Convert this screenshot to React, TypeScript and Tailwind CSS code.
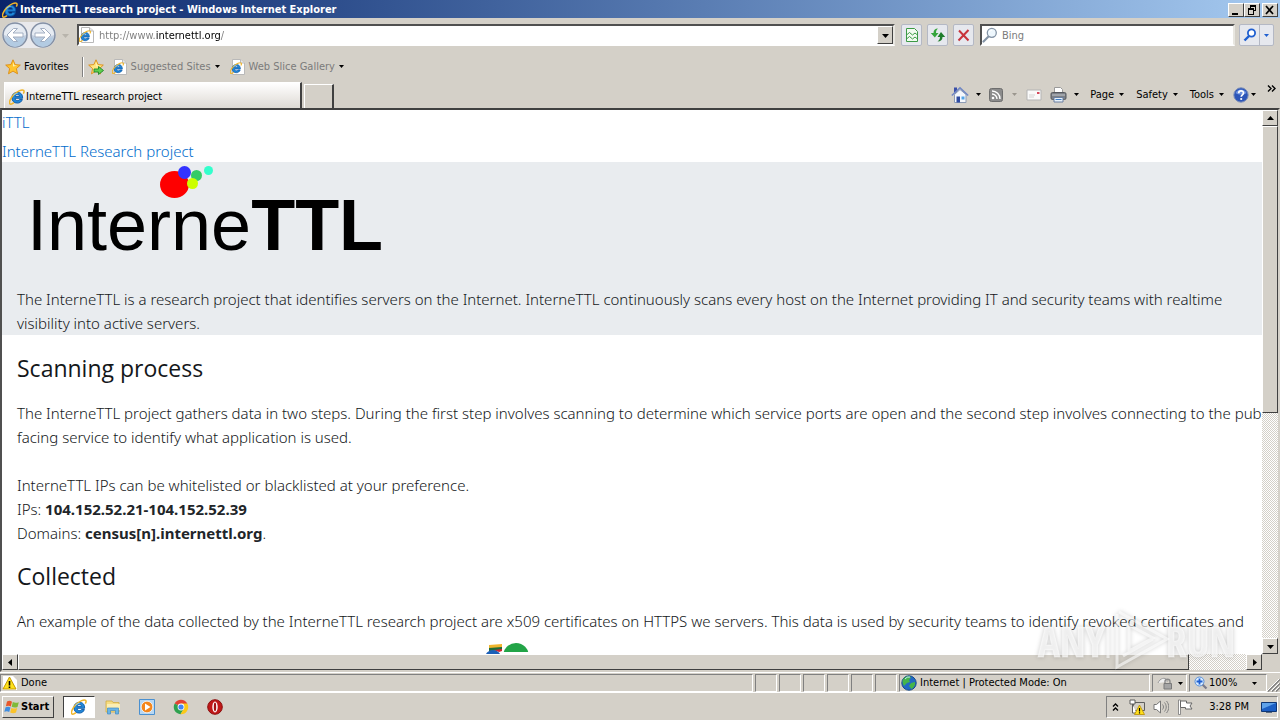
import type { ReactNode } from "react";

const raised =
  "border border-t-white border-l-white border-r-[#404040] border-b-[#404040] bg-[#d4d0c8]";
const sunken = "border border-t-[#808080] border-l-[#808080] border-r-white border-b-white";
const dither =
  "bg-[repeating-conic-gradient(#ffffff_0_25%,#d4d0c8_0_50%)] bg-[length:2px_2px]";

function Caret({ dir = "down", tone = "black" }: { dir?: "down" | "up" | "left" | "right"; tone?: string }) {
  const points = {
    down: "0,2 7,2 3.5,6",
    up: "0,5 7,5 3.5,1",
    left: "5,0 5,7 1,3.5",
    right: "2,0 2,7 6,3.5",
  }[dir];
  return (
    <svg viewBox="0 0 7 7" className="h-[7px] w-[7px] shrink-0" aria-hidden="true">
      <polygon points={points} fill={tone} />
    </svg>
  );
}

function MenuCaret({ tone = "black" }: { tone?: string }) {
  return (
    <svg viewBox="0 0 5 3" className="h-[3px] w-[5px] shrink-0" aria-hidden="true">
      <polygon points="0,0 5,0 2.5,3" fill={tone} />
    </svg>
  );
}

function IeGlyph() {
  return (
    <g>
      <path
        d="M13.600 9.300H6.100c.1 1.500 1 2.300 2.300 2.300 1 0 1.700-.4 2.100-1.100h2.900c-.8 2.300-2.600 3.600-5.100 3.600C5 14.100 2.900 12 2.900 8.800S5.100 3.300 8.400 3.300c3.400 0 5.400 2.300 5.200 6zM6.200 7.300h4.300c-.1-1.200-.9-1.900-2.100-1.900-1.200 0-2 .7-2.200 1.900z"
        fill="#2187d8"
        stroke="#0b57a5"
        strokeWidth=".9"
      />
      <path
        d="M5 13.600c-2 1.500-3.600 1.900-4.200 1.100C-.3 13.200 1.600 9 5 5.500 8.600 1.900 13.100.1 14.600 1.400c.7.6.5 1.900-.3 3.300"
        fill="none"
        stroke="#efb52a"
        strokeWidth="1.500"
      />
      <path d="M4.500 6.500c.9-1.400 2.400-2 4-2" fill="none" stroke="#8bd3ff" strokeWidth=".9" />
    </g>
  );
}

function IeIcon() {
  return (
    <svg viewBox="0 0 16 16" className="h-4 w-4 shrink-0" aria-hidden="true">
      <IeGlyph />
    </svg>
  );
}

function IePageIcon() {
  return (
    <svg viewBox="0 0 16 16" className="h-4 w-4 shrink-0" aria-hidden="true">
      <path d="M2.500 .5h8l4 3.500v11.500h-12z" fill="#fff" stroke="#b9b9b9" />
      <path d="M10.500 .5v3.500h4" fill="#e8e8e8" stroke="#b9b9b9" />
      <g transform="translate(0 3) scale(.76)">
        <IeGlyph />
      </g>
    </svg>
  );
}

function StarIcon({ arrow = false }: { arrow?: boolean }) {
  return (
    <svg viewBox="0 0 16 16" className="h-4 w-4 shrink-0" aria-hidden="true">
      <path
        d="M8 .8l2.100 4.800 5.200.5-3.900 3.500 1.100 5.200L8 12.100l-4.500 2.700 1.100-5.200L.7 6.100l5.200-.5z"
        fill={arrow ? "#ffe680" : "#ffc42e"}
        stroke="#dc8b10"
        strokeWidth=".9"
      />
      <path d="M8 3l1.200 3.300 3 .4-4.200.8z" fill="#fff2b0" />
      {arrow && (
        <path d="M6 10h4.500V7.500L15.500 11.500l-5 4V13H6z" fill="#5fd04f" stroke="#21862a" strokeWidth=".9" />
      )}
    </svg>
  );
}

function ArrowCircle({ label, flip = false }: { label: string; flip?: boolean }) {
  return (
    <button aria-label={label} className="h-[26px] w-[26px]">
      <svg viewBox="0 0 26 26" className="h-[26px] w-[26px]" aria-hidden="true">
        <circle cx="13" cy="13" r="12" fill="#c3cfe0" stroke="#8490a4" strokeWidth="1.500" />
        <path d="M2 13a11 11 0 0 1 22 0c-5 2-17 2-22 0z" fill="#e6ebf2" />
        <path d="M3 15c5 2 15 2 20 0a10 10 0 0 1-20 0z" fill="#b3cbe2" />
        <g transform={flip ? "matrix(-1 0 0 1 26 0)" : undefined}>
          <path
            d="M5 13l6.500-6.500h4l-4.500 4.500h10v4H11l4.500 4.500h-4z"
            fill="#fff"
            stroke="#9aa7bc"
            strokeWidth=".9"
          />
        </g>
      </svg>
    </button>
  );
}

function Magnifier({ dark }: { dark: string }) {
  return (
    <svg viewBox="0 0 16 16" className="h-4 w-4 shrink-0" aria-hidden="true">
      <path d="M1.500 14.500l5-5" stroke={dark} strokeWidth="2.200" strokeLinecap="round" />
      <circle cx="9.800" cy="5.800" r="4.500" fill="#eef7fd" stroke={dark} strokeWidth="1.300" />
      <path d="M7.500 5a2.500 2.500 0 0 1 2.500-1.800" stroke="#fff" fill="none" />
    </svg>
  );
}

function ToolButton({ label, children }: { label: string; children: ReactNode }) {
  return (
    <button
      aria-label={label}
      className="flex h-[22px] w-[21px] items-center justify-center rounded-[2px] border border-[#b4b8c4] bg-[#e6e8ee]"
    >
      <svg viewBox="0 0 16 16" className="h-4 w-4 shrink-0" aria-hidden="true">
        {children}
      </svg>
    </button>
  );
}

function TitleBar() {
  return (
    <header className="flex h-[18px] shrink-0 items-center bg-linear-to-r from-[#0a246a] to-[#a6caf0] pt-px pr-[2px] pl-[2px] font-bold text-white">
      <IeIcon />
      <h1 className="ml-[2px] flex-1 whitespace-nowrap">InterneTTL research project - Windows Internet Explorer</h1>
      <div className="flex text-black">
        <button aria-label="Minimize" className={`h-[14px] w-4 ${raised}`}>
          <svg viewBox="0 0 14 12" className="h-3 w-[14px]" aria-hidden="true">
            <path d="M3 9h6v2H3z" />
          </svg>
        </button>
        <button aria-label="Restore" className={`h-[14px] w-4 ${raised}`}>
          <svg viewBox="0 0 14 12" className="h-3 w-[14px]" aria-hidden="true">
            <path d="M5 1h6v6H9V6h1V3H6v1H5zM3 4h6v7H3zM4 6v4h4V6z" fillRule="evenodd" />
          </svg>
        </button>
        <button aria-label="Close" className={`ml-[2px] h-[14px] w-4 ${raised}`}>
          <svg viewBox="0 0 14 12" className="h-3 w-[14px]" aria-hidden="true">
            <path d="M3 2l7 8M10 2l-7 8" stroke="#000" strokeWidth="1.700" />
          </svg>
        </button>
      </div>
    </header>
  );
}

function AddressRow() {
  return (
    <div className="flex h-[34px] shrink-0 items-center pr-[6px] pl-[2px]">
      <div className="flex gap-[2px] rounded-full bg-[#e9e9ec]">
        <ArrowCircle label="Back" />
        <ArrowCircle label="Forward" flip />
      </div>
      <button aria-label="Recent pages" className="mr-2 ml-[6px]">
        <Caret tone="#b8b4ac" />
      </button>
      <div className="flex h-[22px] flex-1 items-center border-2 border-t-[#505050] border-r-[#e8e6e0] border-b-white border-l-[#505050] bg-white">
        <IePageIcon />
        <input
          aria-label="Address"
          defaultValue="http://www.internettl.org/"
          className="ml-[4px] min-w-0 flex-1 bg-[linear-gradient(90deg,#7b7b7b_57px,#000_57px,#000_121px,#7b7b7b_121px)] bg-clip-text pt-px text-transparent outline-none"
        />
        <button aria-label="Show addresses" className={`flex h-[18px] w-4 items-center justify-center ${raised}`}>
          <Caret />
        </button>
      </div>
      <div className="ml-[6px] flex gap-[5px]">
        <ToolButton label="Compatibility view">
          <path d="M2.500 1.500h8l3 3v10h-11z" fill="#f2fbf0" stroke="#3c9a45" />
          <path d="M2.500 8l3-2.500 3 2.500 2.500-2 2.500 2M2.500 12l3-2.500 3 2.500 2.500-2 2.500 2" fill="none" stroke="#3c9a45" />
        </ToolButton>
        <ToolButton label="Refresh">
          <path d="M8 1.500C5 1.500 3.500 3 3.500 6H.8l4 4.500L8.500 6H6C6 4 6.500 3 8 1.500z" fill="#35a53c" />
          <path d="M7.500 14.500c3.300 0 5-1.700 5-4.500h2.700L11 5 7.500 10H10c0 2-.7 3-2.500 4.500z" fill="#1f7d2b" />
        </ToolButton>
        <ToolButton label="Stop">
          <path d="M3 3.500l9.500 10M12.500 3l-10 10.500" stroke="#c8343c" strokeWidth="2" />
        </ToolButton>
      </div>
      <div className="ml-[6px] flex h-[22px] w-[255px] items-center border-2 border-t-[#505050] border-r-[#e8e6e0] border-b-white border-l-[#505050] bg-white">
        <Magnifier dark="#8494a6" />
        <input
          aria-label="Search"
          placeholder="Bing"
          className="ml-[4px] min-w-0 flex-1 pt-px outline-none placeholder:text-[#7b7b7b]"
        />
      </div>
      <div className="ml-[4px] flex h-[22px] rounded-[2px] border border-[#b4b8c4] bg-[#e6e8ee]">
        <button aria-label="Search" className="flex w-5 items-center justify-center border-r border-[#b4b8c4]">
          <svg viewBox="0 0 14 14" className="h-[14px] w-[14px]" aria-hidden="true">
            <path d="M1.500 12.500l4.500-4.500" stroke="#1f5fd0" strokeWidth="2.400" />
            <circle cx="8.500" cy="5" r="3.600" fill="#fff" stroke="#1f5fd0" strokeWidth="1.800" />
          </svg>
        </button>
        <button aria-label="Search options" className="flex w-[13px] items-center justify-center">
          <MenuCaret tone="#1f5fd0" />
        </button>
      </div>
    </div>
  );
}

function FavoritesRow() {
  return (
    <nav aria-label="Favorites" className="flex h-[29px] shrink-0 items-center pl-[5px]">
      <button className="flex items-center gap-[3px]">
        <StarIcon />
        Favorites
      </button>
      <span className="ml-[13px] h-5 w-[2px] border-r border-l border-r-white border-l-[#808080]" />
      <button aria-label="Add to favorites bar" className="ml-[4px]">
        <StarIcon arrow />
      </button>
      <button className="ml-2 flex items-center text-[#7b7b7b]">
        <IePageIcon />
        <span className="mr-[4px] ml-[3px]">Suggested Sites</span>
        <MenuCaret />
      </button>
      <button className="ml-[10px] flex items-center text-[#7b7b7b]">
        <IePageIcon />
        <span className="mr-[4px] ml-[3px]">Web Slice Gallery</span>
        <MenuCaret />
      </button>
    </nav>
  );
}

function CommandMenu({ label }: { label: string }) {
  return (
    <button className="flex items-center gap-[5px]">
      {label}
      <MenuCaret />
    </button>
  );
}

function TabRow() {
  return (
    <div className="flex h-[27px] shrink-0 items-end pl-[4px]">
      <button className="flex h-[26px] w-[298px] items-center gap-px border border-t-white border-r-2 border-b-0 border-l-white border-r-[#404040] bg-linear-to-b from-white to-[#dedad4] pt-[2px] pl-[4px]">
        <IeIcon />
        InterneTTL research project
      </button>
      <button
        aria-label="New tab"
        className="ml-[2px] h-6 w-[30px] border border-t-white border-r-2 border-b-0 border-l-white border-r-[#404040] bg-[#d4d0c8]"
      />
      <div className="flex h-[27px] flex-1 items-center justify-end">
        <button aria-label="Home" className="flex items-center gap-[7px]">
          <svg viewBox="0 0 18 18" className="h-[18px] w-[18px]" aria-hidden="true">
            <path d="M3 1.500h3v5H3z" fill="#3a4fa8" />
            <path d="M3.500 8.500L9 3.500l6 5v8H3.500z" fill="#f4f7fc" stroke="#8c9bb5" />
            <path d="M.8 9.500L9 1.800l8.200 7.700" fill="none" stroke="#6f86c4" strokeWidth="1.500" />
            <path d="M5.500 10.500H9v6H5.500z" fill="#2d4aa0" />
            <path d="M10.500 10.500h3v3h-3z" fill="#54a4e8" />
          </svg>
          <MenuCaret />
        </button>
        <button aria-label="Feeds" className="ml-2 flex items-center gap-[9px]">
          <svg viewBox="0 0 14 14" className="h-[14px] w-[14px]" aria-hidden="true">
            <rect x=".5" y=".5" width="13" height="13" rx="2" fill="#8b8b8b" stroke="#6e6e6e" />
            <circle cx="4" cy="10" r="1.300" fill="#fff" />
            <path d="M3 6a5 5 0 0 1 5 5M3 3a8 8 0 0 1 8 8" fill="none" stroke="#fff" strokeWidth="1.400" />
          </svg>
          <MenuCaret tone="#9a968e" />
        </button>
        <button aria-label="Read mail" className="ml-[9px]">
          <svg viewBox="0 0 16 12" className="h-3 w-4" aria-hidden="true">
            <path d="M1 1h14v10H1z" fill="#fafafa" stroke="#b4b4b4" />
            <path d="M11 3h2.500v2H11z" fill="#d6495c" />
            <path d="M3 6h6M3 8h5" stroke="#d2d2d2" />
          </svg>
        </button>
        <button aria-label="Print" className="ml-2 flex items-center gap-[7px]">
          <svg viewBox="0 0 17 16" className="h-4 w-[17px]" aria-hidden="true">
            <path d="M4.500 .5h6l2 2v4h-8z" fill="#fff" stroke="#9a9a9a" />
            <rect x="1" y="5.500" width="15" height="7" rx="1.500" fill="#7c8086" stroke="#55585e" />
            <path d="M2 8h13" stroke="#c5c9cf" />
            <path d="M4 10.500h9v4.500H4z" fill="#e8f2fb" stroke="#6a7fa0" />
            <path d="M5.500 12.500h6" stroke="#3f7fc5" />
          </svg>
          <MenuCaret />
        </button>
        <div className="ml-[11px] flex gap-3">
          <CommandMenu label="Page" />
          <CommandMenu label="Safety" />
          <CommandMenu label="Tools" />
        </div>
        <button aria-label="Help" className="ml-[9px] flex items-center gap-[2px]">
          <svg viewBox="0 0 16 16" className="h-4 w-4" aria-hidden="true">
            <circle cx="8" cy="8" r="7.200" fill="#2c55b8" stroke="#7d8fb8" />
            <path d="M2.500 6a6 6 0 0 1 11 0c-3 2-8 2-11 0z" fill="#6d92e0" />
            <path d="M5.700 6.200c0-3 4.800-3 4.800-.2 0 1.800-2.300 1.800-2.300 3.700" fill="none" stroke="#fff" strokeWidth="1.700" />
            <circle cx="8.200" cy="12" r="1.100" fill="#fff" />
          </svg>
          <MenuCaret />
        </button>
        <button aria-label="More commands" className="mr-[4px] ml-[11px] self-start pt-[4px]">
          <svg viewBox="0 0 9 7" className="h-[7px] w-[9px]" aria-hidden="true">
            <path d="M1 .5l3 3-3 3M5 .5l3 3-3 3" fill="none" stroke="#000" strokeWidth="1.400" />
          </svg>
        </button>
      </div>
    </div>
  );
}

function SiteLogo() {
  return (
    <svg viewBox="0 0 400 100" className="h-[100px] w-[400px]" role="img" aria-label="InterneTTL">
      <text x="25" y="88" fontFamily="Liberation Sans, Arial, sans-serif" fontSize="72" fill="#000">
        Interne<tspan fontWeight="700">TTL</tspan>
      </text>
      <ellipse cx="172.500" cy="22.500" rx="14.500" ry="13.500" fill="#fe0000" />
      <circle cx="194.500" cy="13.500" r="5.500" fill="#33cc66" />
      <circle cx="190.500" cy="21.500" r="5.500" fill="#ccff00" />
      <circle cx="182.500" cy="10.500" r="6.500" fill="#3333ff" />
      <circle cx="206.500" cy="8.500" r="4.500" fill="#33ffcc" />
    </svg>
  );
}

function SectionTitle({ children }: { children: ReactNode }) {
  return (
    <h2 className="mb-[18px] font-['Open_Sans','Noto_Sans',sans-serif] text-[23px] leading-[29px] font-normal">
      {children}
    </h2>
  );
}

function PageContent() {
  return (
    <main className="min-w-0 flex-1 overflow-hidden bg-white font-['Noto_Sans','Open_Sans',sans-serif] text-[15px] leading-6 font-light whitespace-nowrap text-[#14171a]">
      <div className="flex flex-col items-start gap-[5px] text-[#006bcc]">
        <a href="#ittl">iTTL</a>
        <a href="#project" className="-mb-px">
          InterneTTL Research project
        </a>
      </div>
      <section className="bg-[#e9ecef]">
        <SiteLogo />
        <p className="pt-[25px] pl-[15px]">
          The InterneTTL is a research project that identifies servers on the Internet. InterneTTL continuously scans
          every host on the Internet providing IT and security teams with realtime
          <br />
          visibility into active servers.
        </p>
      </section>
      <section className="pt-[19px] pl-[15px]">
        <SectionTitle>Scanning process</SectionTitle>
        <p>
          The InterneTTL project gathers data in two steps. During the first step involves scanning to determine which
          service ports are open and the second step involves connecting to the public-
          <br />
          facing service to identify what application is used.
        </p>
        <p className="mt-6">
          InterneTTL IPs can be whitelisted or blacklisted at your preference.
          <br />
          IPs: <b className="font-bold text-[#212529]">104.152.52.21-104.152.52.39</b>
          <br />
          Domains: <b className="font-bold text-[#212529]">census[n].internettl.org</b>.
        </p>
      </section>
      <section className="pt-[17px] pl-[15px]">
        <SectionTitle>Collected</SectionTitle>
        <p>
          An example of the data collected by the InterneTTL research project are x509 certificates on HTTPS we servers.
          This data is used by security teams to identify revoked certificates and
        </p>
        <svg viewBox="0 0 60 26" className="mt-[9px] ml-[463px] h-[26px] w-[60px]" aria-hidden="true">
          <path d="M9 3l13-1v6l-13 1z" fill="#f0b52d" />
          <path d="M9 6l13-1v3l-13 1z" fill="#1f6b3a" />
          <path d="M14 8l8-1v2l-3 1z" fill="#d3232f" />
          <circle cx="13" cy="16" r="8" fill="#1b5fb8" />
          <circle cx="36" cy="14" r="13" fill="#22a447" />
          <path d="M22 10h28v16H22z" fill="#fff" />
        </svg>
      </section>
    </main>
  );
}

function ScrollButton({ dir }: { dir: "up" | "down" | "left" | "right" }) {
  return (
    <button
      aria-label={`Scroll ${dir}`}
      className={`flex h-4 w-4 shrink-0 items-center justify-center ${raised}`}
    >
      <Caret dir={dir} />
    </button>
  );
}

function Watermark() {
  return (
    <svg
      viewBox="0 0 210 66"
      className="pointer-events-none absolute right-[36px] bottom-0 h-[66px] w-[210px] drop-shadow-[0_0_2px_rgba(0,0,0,0.3)]"
      aria-hidden="true"
    >
      <g
        fill="#fff"
        fillOpacity=".65"
        fontFamily="Open Sans Condensed, Roboto Condensed, Noto Sans Condensed, Liberation Sans, sans-serif"
        fontSize="41"
        fontWeight="300"
        stroke="#fff"
        strokeOpacity=".4"
      >
        <text x="6" y="53">
          ANY
        </text>
        <text x="134" y="53">
          RUN
        </text>
      </g>
      <path
        d="M76 22v32M87 8l48 27-50 28V10M97 21v26l24-13zM91 52l30-17"
        fill="none"
        stroke="#fff"
        strokeOpacity=".6"
        strokeWidth="3"
      />
    </svg>
  );
}

function Viewport() {
  return (
    <div className="relative flex min-h-0 flex-1 flex-col border-2 border-t-[#404040] border-r-[#d4d0c8] border-b-[#d4d0c8] border-l-[#505050]">
      <div className="flex min-h-0 flex-1">
        <PageContent />
        <div className={`flex w-4 shrink-0 flex-col ${dither}`}>
          <ScrollButton dir="up" />
          <div className="min-h-0 flex-1">
            <div className={`h-[56%] w-4 ${raised}`} />
          </div>
          <ScrollButton dir="down" />
        </div>
      </div>
      <div className="flex h-4 shrink-0">
        <div className={`flex flex-1 ${dither}`}>
          <ScrollButton dir="left" />
          <div className="flex-1 pr-[57px]">
            <div className={`h-4 ${raised}`} />
          </div>
          <ScrollButton dir="right" />
        </div>
        <div className="w-4 bg-[#d4d0c8]" />
      </div>
      <Watermark />
    </div>
  );
}

const emptyPanes = [0, 1, 2, 3, 4, 5];

function StatusBar() {
  return (
    <div className="flex h-5 shrink-0 gap-[2px] border-t border-white pt-px">
      <div className={`flex flex-1 items-center gap-[3px] pl-px ${sunken}`}>
        <svg viewBox="0 0 16 16" className="h-4 w-4" aria-hidden="true">
          <path d="M1 1h10l4 4v10H1z" fill="#fff" />
          <path d="M7.500 2l6.500 12H1z" fill="#ffe11a" stroke="#c49a00" />
          <path d="M7.500 6v4.500M7.500 11.500v1.500" stroke="#000" strokeWidth="1.600" />
        </svg>
        Done
      </div>
      {emptyPanes.map((pane) => (
        <div key={pane} className={`w-[22px] ${sunken}`} />
      ))}
      <div className={`flex w-[251px] items-center gap-[3px] pl-px ${sunken}`}>
        <svg viewBox="0 0 16 16" className="h-4 w-4" aria-hidden="true">
          <circle cx="8" cy="8" r="7.200" fill="#2269c4" stroke="#174a8a" />
          <path d="M3 3c3-2.500 6-2 7-.5L8 5l1 2-3 1-3 3C1 8 1 5 3 3zM10 8l4-1c.5 3-1 5.500-3.500 7L8 11z" fill="#45b549" />
          <path d="M4 4a5 5 0 0 1 5-2" stroke="#bfe6ff" fill="none" />
        </svg>
        Internet | Protected Mode: On
      </div>
      <button aria-label="Privacy" className={`flex w-[35px] items-center justify-center gap-[5px] ${sunken}`}>
        <svg viewBox="0 0 16 16" className="h-4 w-4" aria-hidden="true">
          <path d="M1 8c2-5 7-6 9-3v2" fill="#f0f0f0" stroke="#9a9a9a" />
          <path d="M8 9V6.500c0-3 5-3 5 0V9" fill="none" stroke="#8a8a8a" strokeWidth="1.400" />
          <path d="M7 8.500h7.500V14H7z" fill="#a4a4a4" stroke="#7a7a7a" />
        </svg>
        <MenuCaret />
      </button>
      <button className={`flex w-[78px] items-center pr-[9px] pl-[4px] whitespace-nowrap ${sunken}`}>
        <svg viewBox="0 0 14 14" className="mr-px h-[14px] w-[14px] shrink-0" aria-hidden="true">
          <path d="M8 8l4.500 4.500" stroke="#7a7a8a" strokeWidth="2.200" />
          <circle cx="5.500" cy="5.500" r="4.500" fill="#d9ecff" stroke="#5a90d8" />
          <path d="M5.500 2.500v6M2.500 5.500h6" stroke="#1f5fd0" strokeWidth="1.800" />
        </svg>
        100%
        <span className="ml-auto">
          <MenuCaret />
        </span>
      </button>
      <svg viewBox="0 0 14 14" className="-ml-[3px] h-[14px] w-[14px] shrink-0 self-end" aria-hidden="true">
        <path d="M2 13.500L14 1.500M6 13.500l8-8M10 13.500l4-4" stroke="#808080" strokeWidth="1.500" />
        <path d="M1 13L13 1M5 13l8-8M9 13l4-4" stroke="#fff" />
      </svg>
    </div>
  );
}

function Taskbar() {
  return (
    <footer className="flex h-7 shrink-0 items-center border-t border-white pr-[2px] pl-[2px]">
      <button className={`flex h-[22px] w-[52px] items-center gap-px pl-px font-bold ${raised}`}>
        <svg viewBox="0 0 16 16" className="h-4 w-4 shrink-0" aria-hidden="true">
          <path d="M3 2.500c2-1 3.500-.8 5 .2L6.800 7.400c-1.600-.9-3-.9-4.900-.2z" fill="#e8572a" />
          <path d="M8.800 3.100c2 1 3.800 1 6 .1L13.500 8c-2 .9-3.800.8-5.800-.2z" fill="#7fba3a" />
          <path d="M1.600 8.200c2-.8 3.400-.7 4.900.2L5.200 13c-1.500-.9-2.900-1-4.900-.2z" fill="#3f8de0" />
          <path d="M7.400 8.900c2 .9 3.800.9 5.800.1L12 13.600c-2 .9-3.900.8-5.800-.2z" fill="#fbc32a" />
        </svg>
        Start
      </button>
      <div className="ml-[9px] flex items-center">
        <button
          aria-label="Internet Explorer"
          className="flex h-[22px] w-8 items-center justify-center border border-t-[#404040] border-r-white border-b-white border-l-[#404040] bg-white"
        >
          <IeIcon />
        </button>
        <div className="ml-[10px] flex gap-[18px]">
          <button aria-label="Windows Explorer">
            <svg viewBox="0 0 16 16" className="h-4 w-4" aria-hidden="true">
              <path d="M1 2h6l1 1.500h6V13H1z" fill="#f6dc83" stroke="#d1ac43" strokeWidth=".8" />
              <path d="M2 5h13v6H2z" fill="#fbeeb4" />
              <path d="M2.500 15V9h11v6h-3v-3.500h-5V15z" fill="#69b4e6" stroke="#3f8bc4" strokeWidth=".7" />
            </svg>
          </button>
          <button aria-label="Media Player">
            <svg viewBox="0 0 16 16" className="h-4 w-4" aria-hidden="true">
              <path d="M.5 .5h15v15H.5z" fill="#b7d7f3" stroke="#4a90d0" />
              <circle cx="8" cy="8" r="5.800" fill="#f4861c" stroke="#fff" strokeWidth=".7" />
              <path d="M6 4.500L11.500 8 6 11.500z" fill="#fff" />
            </svg>
          </button>
          <button aria-label="Chrome">
            <svg viewBox="0 0 16 16" className="h-4 w-4" aria-hidden="true">
              <path d="M8 8L1.700 4.400A7.200 7.200 0 0 1 14.300 4.500z" fill="#e34133" />
              <path d="M8 8L1.700 4.400A7.200 7.200 0 0 0 7.500 15.200L11 9.500z" fill="#2fa14f" />
              <path d="M8 4.600h6.300A7.200 7.200 0 0 1 7.500 15.200L11 9.500z" fill="#fbc918" />
              <circle cx="8" cy="8" r="3.400" fill="#fff" />
              <circle cx="8" cy="8" r="2.600" fill="#4285f4" />
            </svg>
          </button>
          <button aria-label="Opera">
            <svg viewBox="0 0 16 16" className="h-4 w-4" aria-hidden="true">
              <circle cx="8" cy="8" r="7.300" fill="#c01818" stroke="#8c0f0f" />
              <ellipse cx="8" cy="8" rx="2.700" ry="5.400" fill="#fff" />
              <ellipse cx="8" cy="8" rx="1.200" ry="4.400" fill="#a31212" />
            </svg>
          </button>
        </div>
      </div>
      <div className={`ml-auto flex h-[22px] items-center pl-[5px] ${sunken}`}>
        <button aria-label="Show hidden icons">
          <svg viewBox="0 0 7 8" className="h-2 w-[7px]" aria-hidden="true">
            <path d="M1 3.500L3.500 1 6 3.500M1 7.500L3.500 5 6 7.500" fill="none" stroke="#000" strokeWidth="1.300" />
          </svg>
        </button>
        <svg viewBox="0 0 16 16" className="ml-[10px] h-4 w-4" aria-hidden="true">
          <path d="M4.500 3.500h11v8h-11z" fill="#d4d0c8" stroke="#5e5e5e" />
          <path d="M1 1h5v4H1zM3.500 5v9h4" fill="#fff" stroke="#5e5e5e" />
          <path d="M10.500 6l5 9.500h-10z" fill="#ffdf1c" stroke="#b88d00" strokeWidth=".8" />
          <path d="M10.500 9v3.500M10.500 13.300v1.200" stroke="#000" strokeWidth="1.200" />
        </svg>
        <svg viewBox="0 0 16 16" className="ml-2 h-4 w-4" aria-hidden="true">
          <path d="M1 5.500h2.500L7.500 2v12L3.500 10.500H1z" fill="#fff" stroke="#777" />
          <path d="M9.500 5.500c1.300 1.500 1.300 3.500 0 5M11.500 3.500c2.300 2.700 2.300 6.300 0 9M13.500 2c3 3.500 3 8.500 0 12" fill="none" stroke="#808080" />
        </svg>
        <svg viewBox="0 0 16 16" className="ml-2 h-4 w-4" aria-hidden="true">
          <path d="M1.500 1h2v14.500h-2z" fill="#fff" stroke="#777" strokeWidth=".8" />
          <path d="M3.500 2h6v2h5.500l-2 3 2 3H8.500V8.500h-5z" fill="#fff" stroke="#666" />
        </svg>
        <time className="ml-4">3:28 PM</time>
        <button aria-label="Show desktop" className="ml-3">
          <svg viewBox="0 0 16 14" className="h-[14px] w-4" aria-hidden="true">
            <path d="M.5 2.500h15v9H.5z" fill="#1c5fc4" stroke="#0e3674" />
            <path d="M1 3h14L1 9z" fill="#5fa2ea" />
            <path d="M5 12.500h6" stroke="#5a6a80" />
          </svg>
        </button>
      </div>
    </footer>
  );
}

export default function App() {
  return (
    <div className="flex h-screen flex-col overflow-hidden bg-[#d4d0c8] font-['DejaVu_Sans_Condensed','DejaVu_Sans',sans-serif] text-[11px] leading-4 text-black">
      <TitleBar />
      <AddressRow />
      <FavoritesRow />
      <TabRow />
      <Viewport />
      <StatusBar />
      <Taskbar />
    </div>
  );
}
